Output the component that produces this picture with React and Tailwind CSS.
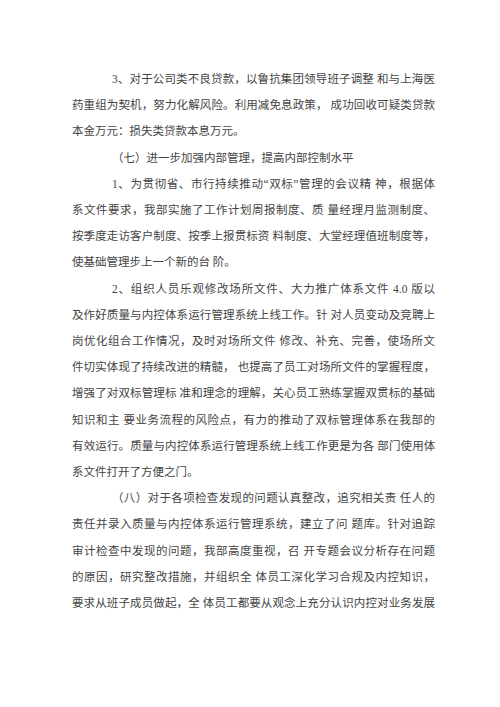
import React from 'react';

// each entry is one printed line: indent = first line of a paragraph, last = paragraph end (not justified)
const lines = [
  { t: '3、对于公司类不良贷款，以鲁抗集团领导班子调整 和与上海医', indent: true },
  { t: '药重组为契机，努力化解风险。利用减免息政策， 成功回收可疑类贷款' },
  { t: '本金万元：损失类贷款本息万元。', last: true },
  { t: '（七）进一步加强内部管理，提高内部控制水平', indent: true, last: true },
  { t: '1、为贯彻省、市行持续推动“双标”管理的会议精 神，根据体', indent: true },
  { t: '系文件要求，我部实施了工作计划周报制度、质 量经理月监测制度、' },
  { t: '按季度走访客户制度、按季上报贯标资 料制度、大堂经理值班制度等，' },
  { t: '使基础管理步上一个新的台 阶。', last: true },
  { t: '2、组织人员乐观修改场所文件、大力推广体系文件 4.0 版以', indent: true },
  { t: '及作好质量与内控体系运行管理系统上线工作。针 对人员变动及竞聘上' },
  { t: '岗优化组合工作情况，及时对场所文件 修改、补充、完善，使场所文' },
  { t: '件切实体现了持续改进的精髓， 也提高了员工对场所文件的掌握程度，' },
  { t: '增强了对双标管理标 准和理念的理解，关心员工熟练掌握双贯标的基础' },
  { t: '知识和主 要业务流程的风险点，有力的推动了双标管理体系在我部的' },
  { t: '有效运行。质量与内控体系运行管理系统上线工作更是为各 部门使用体', tight: true },
  { t: '系文件打开了方便之门。', last: true },
  { t: '（八）对于各项检查发现的问题认真整改，追究相关责 任人的', indent: true },
  { t: '责任并录入质量与内控体系运行管理系统，建立了问 题库。针对追踪' },
  { t: '审计检查中发现的问题，我部高度重视，召 开专题会议分析存在问题' },
  { t: '的原因，研究整改措施，并组织全 体员工深化学习合规及内控知识，' },
  { t: '要求从班子成员做起，全 体员工都要从观念上充分认识内控对业务发展' },
];

function Line({ t, indent, last, tight }) {
  const align = last ? 'text-left' : 'text-justify [text-align-last:justify]';
  const pad = indent ? 'pl-[40px]' : '';
  const track = tight ? 'tracking-[-0.35px]' : '';
  return <div className={`${align} ${pad} ${track}`}>{t}</div>;
}

export default function App() {
  return (
    <div className="min-h-[707px] w-[500px] bg-white pt-[66px] pl-[72px]">
      <div className="w-[363px] font-['Liberation_Serif','Noto_Sans_CJK_SC',serif] text-[11.5px] leading-[26.2px] text-[#444]">
        {lines.map((l, i) => (
          <Line key={i} {...l} />
        ))}
      </div>
    </div>
  );
}
